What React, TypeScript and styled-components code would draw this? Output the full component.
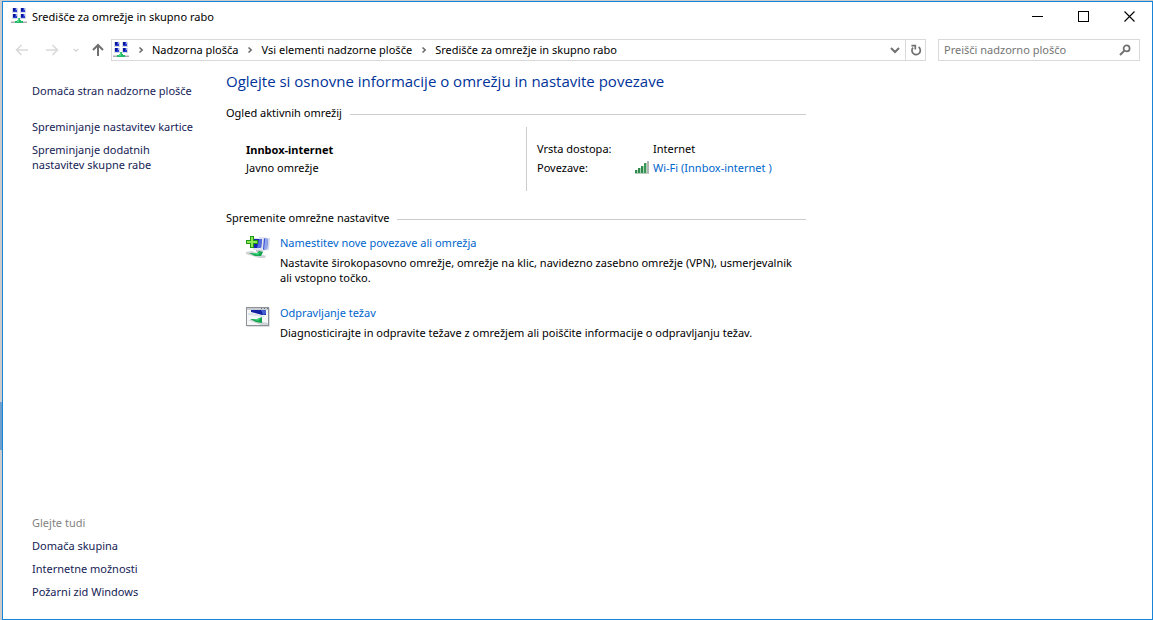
import React from "react";
import styled, { createGlobalStyle } from "styled-components";

const GlobalStyle = createGlobalStyle`
  *, *::before, *::after { box-sizing: border-box; }
  body {
    margin: 0;
    background: #cccccc;
    color: #000;
    font-family: "Noto Sans", "Open Sans", sans-serif;
    font-size: 11px;
    line-height: 15px;
  }
  button, input { font: inherit; }
  h1, h2, h3, p, ul, ol, dl, dd { margin: 0; padding: 0; }
  ul, ol { list-style: none; }
  svg { display: block; flex: none; }
`;

const Desktop = styled.div`
  display: flex;
  min-height: 100vh;
  padding-top: 1px;
`;

const DesktopEdge = styled.div`
  flex: none;
  width: 2px;
  background: linear-gradient(#cccccc 401px, #6f9fcc 401px, #6f9fcc 449px, #cccccc 449px);
`;

const Window = styled.div`
  display: flex;
  flex: 1;
  flex-direction: column;
  min-width: 0;
  border: 1px solid #1883d7;
  background: #fff;
`;

const TitleBar = styled.header`
  display: flex;
  align-items: center;
  height: 28px;
  padding-left: 8px;
`;

const WindowTitle = styled.span`
  flex: 1;
  padding-left: 5px;
`;

const CaptionButton = styled.button`
  display: grid;
  place-items: center;
  width: 46px;
  height: 28px;
  padding: 0;
  border: 0;
  background: transparent;
  color: #000;
  &:hover { background: #e5e5e5; }
`;

const Toolbar = styled.div`
  display: flex;
  align-items: center;
  padding: 9px 12px 0 8px;
`;

const NavButton = styled.button<{ $width: number; $color: string }>`
  display: grid;
  place-items: center;
  width: ${(p) => p.$width}px;
  height: 22px;
  padding: 0;
  border: 0;
  background: transparent;
  color: ${(p) => p.$color};
`;

const UpButton = styled(NavButton)`
  padding-left: 4px;
`;

const AddressBar = styled.nav`
  display: flex;
  flex: 1;
  align-items: center;
  height: 22px;
  min-width: 0;
  padding-left: 1px;
  border: 1px solid #d9d9d9;
`;

const Crumbs = styled.ol`
  display: flex;
  flex: 1;
  align-items: center;
  padding-bottom: 2px;
`;

const Crumb = styled.li`
  display: flex;
  align-items: center;
  white-space: nowrap;
`;

const CrumbLink = styled.a`
  color: #000;
  text-decoration: none;
`;

const CrumbArrow = styled.span`
  display: grid;
  place-items: center;
  width: 23px;
  padding-top: 2px;
  color: #666;
`;

const RefreshButton = styled(NavButton)`
  height: 20px;
  border-left: 1px solid #d9d9d9;
`;

const SearchBox = styled.form`
  display: flex;
  align-items: center;
  width: 202px;
  height: 22px;
  margin-left: 12px;
  padding-left: 5px;
  border: 1px solid #d9d9d9;
`;

const SearchInput = styled.input`
  flex: 1;
  min-width: 0;
  padding: 0 0 2px;
  border: 0;
  outline: 0;
  background: transparent;
  &::placeholder { color: #757575; opacity: 1; }
`;

const Body = styled.div`
  display: flex;
  flex: 1;
  padding: 9px 29px 20px;
`;

const Sidebar = styled.aside`
  display: flex;
  flex: none;
  flex-direction: column;
  justify-content: space-between;
  width: 194px;
  padding: 13px 26px 0 0;
`;

const LinkList = styled.ul`
  display: flex;
  flex-direction: column;
  gap: 8px;
`;

const SideLink = styled.a`
  color: #151c55;
  text-decoration: none;
`;

const HomeLink = styled(SideLink)`
  display: block;
  margin-bottom: 21px;
`;

const SeeAlso = styled.h2`
  margin-bottom: 8px;
  color: #838383;
  font-size: 11px;
  font-weight: 400;
`;

const Content = styled.main`
  flex: 1;
  min-width: 0;
  max-width: 580px;
`;

const PageTitle = styled.h1`
  color: #003399;
  font-family: "Open Sans", "Noto Sans", sans-serif;
  font-size: 15px;
  font-weight: 400;
  line-height: 22px;
`;

const SectionTitle = styled.h2`
  display: flex;
  align-items: center;
  gap: 8px;
  font-size: 11px;
  font-weight: 400;
  &::after {
    content: "";
    flex: 1;
    height: 1px;
    margin-top: 3px;
    background: #cccccc;
  }
`;

const ActiveSection = styled.section`
  margin-top: 13px;
`;

const ChangeSection = styled.section`
  margin-top: 19px;
`;

const NetworkRow = styled.div`
  display: flex;
  height: 64px;
  margin-top: 7px;
  padding-left: 20px;
`;

const NetworkName = styled.div`
  width: 280px;
  padding-top: 15px;
`;

const NameTitle = styled.h3`
  margin-bottom: 3px;
  font-size: 11px;
  font-weight: 700;
`;

const NetworkDetails = styled.dl`
  display: grid;
  flex: 1;
  grid-template-columns: 98px 1fr;
  align-content: start;
  row-gap: 4px;
  padding: 14px 0 0 10px;
  border-left: 1px solid #cccccc;
`;

const DetailValue = styled.dd`
  display: grid;
  grid-template-columns: 14px 1fr;
  column-gap: 4px;
  align-items: center;
`;

const ActionLink = styled.a`
  color: #0066cc;
  text-decoration: none;
  &:hover { text-decoration: underline; }
`;

const Tasks = styled.ul`
  display: flex;
  flex-direction: column;
  gap: 20px;
  padding: 10px 0 0 20px;
`;

const Task = styled.li`
  display: flex;
  gap: 10px;
`;

const TaskText = styled.p`
  margin-top: 5px;
`;

function NetworkCenterIcon() {
  return (
    <svg width="16" height="16" viewBox="0 0 16 16" shapeRendering="crispEdges" aria-hidden="true">
      {[[1, 0], [9, 0], [1, 6], [9, 6]].map(([x, y]) => (
        <g key={`${x}-${y}`}>
          <rect x={x} y={y} width="6" height="5" fill="#d3d8e4" />
          <rect x={x + 1} y={y} width="4" height="4" fill="#2a3fd0" />
          <rect x={x + 1} y={y} width="2" height="3" fill="#0a1699" />
          <rect x={x + 4} y={y} width="1" height="2" fill="#9aa8f0" />
        </g>
      ))}
      <rect x="0" y="13" width="16" height="1" fill="#d5d7d9" />
      <rect x="0" y="14" width="16" height="1" fill="#a9adb0" />
      <path d="M7 10h2v2h1v1h2v2H4v-2h2v-1h1z" fill="#27b96a" />
      <path d="M7 10h1v4H6v-2h1z" fill="#4fd88c" />
    </svg>
  );
}

function ArrowIcon({ angle = 0 }: { angle?: number }) {
  return (
    <svg width="14" height="14" viewBox="0 0 14 14" fill="none" stroke="currentColor" strokeWidth="1.6" aria-hidden="true">
      <g transform={`rotate(${angle} 7 7)`}>
        <path d="M13 7H1.5M6.5 2L1.5 7l5 5" />
      </g>
    </svg>
  );
}

function UpIcon() {
  return (
    <svg width="14" height="14" viewBox="0 0 14 14" fill="none" stroke="currentColor" strokeWidth="2" aria-hidden="true">
      <path d="M7 13V2M2 7l5-5 5 5" />
    </svg>
  );
}

function ChevronDown({ size, weight }: { size: number; weight: number }) {
  return (
    <svg width={size} height={size} viewBox="0 0 10 10" fill="none" stroke="currentColor" strokeWidth={weight} aria-hidden="true">
      <path d="M1 3l4 4 4-4" />
    </svg>
  );
}

function ChevronRight() {
  return (
    <svg width="6" height="8" viewBox="0 0 6 8" fill="none" stroke="currentColor" strokeWidth="1.5" aria-hidden="true">
      <path d="M1.5 1.5L4.2 4 1.5 6.5" />
    </svg>
  );
}

function RefreshIcon() {
  return (
    <svg width="12" height="12" viewBox="0 0 12 12" fill="none" stroke="currentColor" strokeWidth="1.7" aria-hidden="true">
      <path d="M8.6 3A4.2 4.2 0 1 1 3 3.6" />
      <path d="M1.4 1.6h3.9V5.4" />
    </svg>
  );
}

function SearchIcon() {
  return (
    <svg width="12" height="12" viewBox="0 0 12 12" fill="none" stroke="currentColor" aria-hidden="true">
      <circle cx="7.6" cy="4.4" r="3" strokeWidth="1.7" />
      <path d="M5.4 6.6L1 11" strokeWidth="2" />
    </svg>
  );
}

function SignalIcon() {
  return (
    <svg width="14" height="13" viewBox="0 0 14 13" aria-hidden="true">
      <rect x="0" y="9" width="2" height="3" fill="#2f8b4b" />
      <rect x="3" y="7" width="2" height="5" fill="#2f8b4b" />
      <rect x="6" y="5" width="2" height="7" fill="#2f8b4b" />
      <rect x="9" y="2" width="2" height="10" fill="#3c9658" />
      <rect x="2" y="9" width="1" height="3" fill="#a9d3b5" />
      <rect x="5" y="7" width="1" height="5" fill="#a9d3b5" />
      <rect x="8" y="5" width="1" height="7" fill="#a9d3b5" />
      <rect x="11" y="2" width="1" height="10" fill="#a9d3b5" />
      <rect x="12" y="0" width="2" height="12" fill="#b5b5b5" />
      <rect x="0" y="12" width="14" height="1" fill="#b9c9bd" />
    </svg>
  );
}

function NewConnectionIcon() {
  return (
    <svg width="24" height="24" viewBox="0 0 24 24" aria-hidden="true">
      <path d="M13 2l11 1-1 12-9 1z" fill="#d5dae8" />
      <path d="M15 3l7 1-1 10-6 1z" fill="#2d45cd" />
      <path d="M19 4l3 0-1 10-3 0z" fill="#91a4ee" />
      <path d="M7 3l11 0-1 12-10 0z" fill="#dfe4ef" />
      <path d="M8 4h8l-1 9H8z" fill="#1625ad" />
      <path d="M13 4h3l-1 9h-4z" fill="#5269df" />
      <path d="M10 15l5 0 3 2-8 0z" fill="#c4c9cf" />
      <path d="M0 17l6-1 14 5-1 2-6 0L0 19z" fill="#d0d3d5" />
      <path d="M3 18l8 0 2-2 4 1-2 4-6 0z" fill="#14a850" />
      <path d="M5 18l7 0 2-1-2 3z" fill="#42d77e" />
      <path d="M4 1h4v4h4v4H8v4H4V9H0V5h4z" fill="#249617" />
      <path d="M5 2h2v4h4v2H7v4H5V8H1V6h4z" fill="#8cea59" />
    </svg>
  );
}

function TroubleshootIcon() {
  return (
    <svg width="24" height="24" viewBox="0 -1 24 24" aria-hidden="true">
      <rect x="1" y="2" width="23" height="19" fill="#dededf" />
      <rect x="0.5" y="1.5" width="22" height="18" fill="#f5f7f9" stroke="#8c9297" />
      <rect x="1" y="2" width="21" height="2" fill="#c6ccd2" />
      <path d="M15 2h1v1h-1zM18 2h1v1h-1zM21 2h1v1h-1z" fill="#6f7780" />
      <path d="M5 4h15v5l-4 0-11-3z" fill="#1421a3" />
      <path d="M15 4h5v4l-3 1z" fill="#4760cf" />
      <path d="M2 7l4 0 12 3v1L2 9z" fill="#dce1ea" />
      <path d="M2 14l4 0 16 3v2l-7 0z" fill="#d0d4d7" />
      <path d="M4 13l7 0 5-2v6l-6-1z" fill="#12a34c" />
      <path d="M6 13l6 0 3-1-3 3z" fill="#41cf79" />
    </svg>
  );
}

const crumbs = ["Nadzorna plošča", "Vsi elementi nadzorne plošče", "Središče za omrežje in skupno rabo"];
const sideTasks = ["Spreminjanje nastavitev kartice", "Spreminjanje dodatnih nastavitev skupne rabe"];
const related = ["Domača skupina", "Internetne možnosti", "Požarni zid Windows"];
const tasks = [
  {
    title: "Namestitev nove povezave ali omrežja",
    text: "Nastavite širokopasovno omrežje, omrežje na klic, navidezno zasebno omrežje (VPN), usmerjevalnik ali vstopno točko.",
    icon: <NewConnectionIcon />,
  },
  {
    title: "Odpravljanje težav",
    text: "Diagnosticirajte in odpravite težave z omrežjem ali poiščite informacije o odpravljanju težav.",
    icon: <TroubleshootIcon />,
  },
];

export default function App() {
  return (
    <>
      <GlobalStyle />
      <Desktop>
        <DesktopEdge />
        <Window>
          <TitleBar>
            <NetworkCenterIcon />
            <WindowTitle>Središče za omrežje in skupno rabo</WindowTitle>
            <CaptionButton aria-label="Minimiraj">
              <svg width="11" height="11" viewBox="0 0 11 11"><path d="M0 5.5h11" stroke="currentColor" /></svg>
            </CaptionButton>
            <CaptionButton aria-label="Maksimiraj">
              <svg width="11" height="11" viewBox="0 0 11 11"><rect x="0.5" y="0.5" width="10" height="10" fill="none" stroke="currentColor" /></svg>
            </CaptionButton>
            <CaptionButton aria-label="Zapri">
              <svg width="11" height="11" viewBox="0 0 11 11"><path d="M0.5 0.5l10 10M10.5 0.5l-10 10" stroke="currentColor" strokeWidth="1.1" /></svg>
            </CaptionButton>
          </TitleBar>

          <Toolbar>
            <NavButton $width={22} $color="#d9d9d9" aria-label="Nazaj"><ArrowIcon /></NavButton>
            <NavButton $width={38} $color="#d9d9d9" aria-label="Naprej"><ArrowIcon angle={180} /></NavButton>
            <NavButton $width={10} $color="#d0d0d0" aria-label="Nedavna mesta"><ChevronDown size={6} weight={2} /></NavButton>
            <UpButton $width={30} $color="#707070" aria-label="Navzgor"><UpIcon /></UpButton>
            <AddressBar aria-label="Naslov">
              <NetworkCenterIcon />
              <Crumbs>
                {crumbs.map((name) => (
                  <Crumb key={name}>
                    <CrumbArrow><ChevronRight /></CrumbArrow>
                    <CrumbLink href="#">{name}</CrumbLink>
                  </Crumb>
                ))}
              </Crumbs>
              <NavButton $width={20} $color="#707070" aria-label="Prejšnja mesta"><ChevronDown size={10} weight={2} /></NavButton>
              <RefreshButton $width={20} $color="#707070" aria-label="Osveži"><RefreshIcon /></RefreshButton>
            </AddressBar>
            <SearchBox role="search">
              <SearchInput type="text" placeholder="Preišči nadzorno ploščo" aria-label="Preišči nadzorno ploščo" />
              <NavButton type="button" $width={28} $color="#707070" aria-label="Išči"><SearchIcon /></NavButton>
            </SearchBox>
          </Toolbar>

          <Body>
            <Sidebar>
              <div>
                <HomeLink href="#">Domača stran nadzorne plošče</HomeLink>
                <LinkList>
                  {sideTasks.map((name) => <li key={name}><SideLink href="#">{name}</SideLink></li>)}
                </LinkList>
              </div>
              <div>
                <SeeAlso>Glejte tudi</SeeAlso>
                <LinkList>
                  {related.map((name) => <li key={name}><SideLink href="#">{name}</SideLink></li>)}
                </LinkList>
              </div>
            </Sidebar>
            <Content>
              <PageTitle>Oglejte si osnovne informacije o omrežju in nastavite povezave</PageTitle>
              <ActiveSection>
                <SectionTitle>Ogled aktivnih omrežij</SectionTitle>
                <NetworkRow>
                  <NetworkName>
                    <NameTitle>Innbox-internet</NameTitle>
                    <p>Javno omrežje</p>
                  </NetworkName>
                  <NetworkDetails>
                    <dt>Vrsta dostopa:</dt>
                    <DetailValue><span />Internet</DetailValue>
                    <dt>Povezave:</dt>
                    <DetailValue>
                      <SignalIcon />
                      <ActionLink href="#">Wi-Fi (Innbox-internet )</ActionLink>
                    </DetailValue>
                  </NetworkDetails>
                </NetworkRow>
              </ActiveSection>
              <ChangeSection>
                <SectionTitle>Spremenite omrežne nastavitve</SectionTitle>
                <Tasks>
                  {tasks.map((task) => (
                    <Task key={task.title}>
                      {task.icon}
                      <div>
                        <ActionLink href="#">{task.title}</ActionLink>
                        <TaskText>{task.text}</TaskText>
                      </div>
                    </Task>
                  ))}
                </Tasks>
              </ChangeSection>
            </Content>
          </Body>
        </Window>
      </Desktop>
    </>
  );
}
